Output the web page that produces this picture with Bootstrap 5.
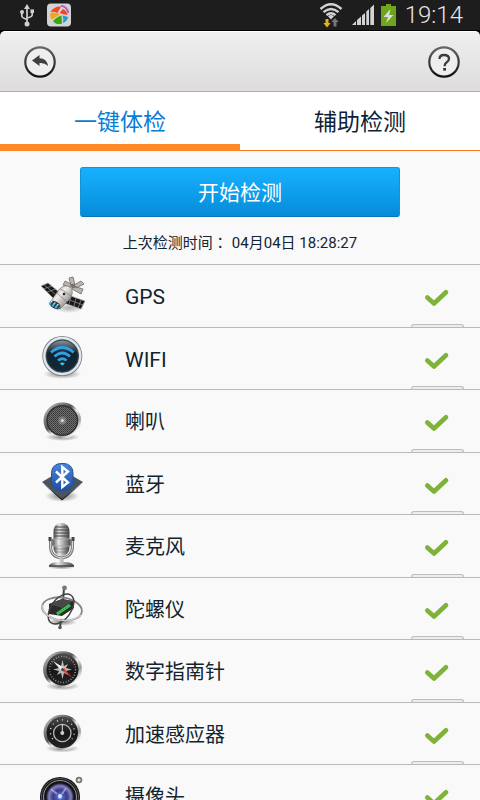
<!DOCTYPE html>
<html lang="zh-CN">
<head>
<meta charset="utf-8">
<meta name="viewport" content="width=device-width, initial-scale=1">
<title>一键体检</title>
<link rel="stylesheet" href="https://cdn.jsdelivr.net/npm/bootstrap@5.3.0/dist/css/bootstrap.min.css">
<style>
body { font-family: Roboto, "Noto Sans CJK SC", sans-serif; background: #f9f9f9; color: #12242f; }
.status { background: #1d1d1d; height: 31px; border-bottom: 1px solid #000; padding: 0 17px 0 18px; }
.app-icon { margin-left: 11px; }
.clock { font-size: 24px; line-height: 30px; color: #e6e6e6; font-weight: 300; margin-left: 6px; }
.head-wrap { background: #000; }
.head { height: 61px; padding: 0 20px 0 24px; border-radius: 5px 5px 0 0; border-top: 1px solid #fff; border-bottom: 1px solid #adadad; background: linear-gradient(#efefef, #dedcdd); }
.round-btn svg, .check, .pic, .status svg { display: block; }
.tabs { height: 59px; background: #fff; }
.tabs a { font-size: 23px; line-height: 62px; height: 59px; color: #0f1f38; border-bottom: 1px solid #f97a1b; }
.tabs a.active { color: #087dd6; border-bottom: 7px solid #ff8a25; }
.start { width: 66.6667%; height: 50px; font-size: 21px; line-height: 50px; color: #fff; border-radius: 3px; background: linear-gradient(#18b1ff, #058cd8); border: 1px solid #1293d8; border-bottom-color: #0478bd; }
.start:hover { color: #fff; background: linear-gradient(#18b1ff, #058cd8); }
.last { font-family: Roboto, "Noto Sans CJK TC", sans-serif; font-size: 15px; line-height: 24px; margin: 14px 0 9px; }
.last time { margin-left: 4px; }
.checks { border-top: 1px solid #b9b9b9; }
.checks .item { height: 62px; padding: 0 30px 0 39px; background: #f9f9f9; border: 0; border-bottom: 1px solid #b9b9b9; border-radius: 0; color: #12242f; font-size: 20px; line-height: 30px; }
.checks .item:nth-child(odd) { height: 63px; }
.checks .item::after { content: ""; position: absolute; right: 16px; bottom: 0; width: 53px; height: 3px; background: #ededed; border: 1px solid #bdbdbd; border-bottom: 0; border-radius: 3px 3px 0 0; }
.checks .name, .check { margin-top: 2px; }
.checks .latin { font-size: 21px; }
.pic { width: 48px; height: 56px; margin-right: 38px; }
</style>
<script src="https://cdn.jsdelivr.net/npm/bootstrap@5.3.0/dist/js/bootstrap.bundle.min.js"></script>
</head>
<body class="vh-100 overflow-hidden d-flex flex-column">
<svg width="0" height="0" class="position-absolute" aria-hidden="true">
  <defs>
    <linearGradient id="ring" x1="0" y1="0" x2="0" y2="1"><stop offset="0" stop-color="#666"/><stop offset="1" stop-color="#111"/></linearGradient>
    <linearGradient id="chrome" x1="0" y1="0" x2="1" y2="1"><stop offset="0" stop-color="#f4f4f4"/><stop offset=".22" stop-color="#8a8a8a"/><stop offset=".42" stop-color="#555"/><stop offset=".55" stop-color="#eee"/><stop offset=".7" stop-color="#999"/><stop offset=".85" stop-color="#fff"/><stop offset="1" stop-color="#999"/></linearGradient>
    <linearGradient id="barrel" x1="0" y1="0" x2="1" y2="0"><stop offset="0" stop-color="#4d4d4d"/><stop offset=".35" stop-color="#e8e8e8"/><stop offset=".6" stop-color="#aaa"/><stop offset="1" stop-color="#444"/></linearGradient>
    <linearGradient id="hull" x1="0" y1="0" x2="1" y2="1"><stop offset="0" stop-color="#8d8984"/><stop offset=".4" stop-color="#efeeec"/><stop offset=".7" stop-color="#a5a19c"/><stop offset="1" stop-color="#4e4a47"/></linearGradient>
    <linearGradient id="dial" x1="0" y1="0" x2="0" y2="1"><stop offset="0" stop-color="#4b4b4b"/><stop offset=".5" stop-color="#161616"/><stop offset="1" stop-color="#252525"/></linearGradient>
    <linearGradient id="navy" x1="0" y1="0" x2="0" y2="1"><stop offset="0" stop-color="#8a98a2"/><stop offset=".4" stop-color="#14222e"/><stop offset="1" stop-color="#102a38"/></linearGradient>
    <linearGradient id="blue" x1="0" y1="0" x2="0" y2="1"><stop offset="0" stop-color="#4d84d4"/><stop offset="1" stop-color="#1c50a5"/></linearGradient>
    <radialGradient id="shade"><stop offset="0" stop-color="#000" stop-opacity=".5"/><stop offset="1" stop-color="#000" stop-opacity="0"/></radialGradient>
    <radialGradient id="lens"><stop offset="0" stop-color="#d5d6ff"/><stop offset=".2" stop-color="#4a66c8"/><stop offset=".5" stop-color="#3d3a80"/><stop offset=".8" stop-color="#8583c4"/><stop offset="1" stop-color="#14142a"/></radialGradient>
    <pattern id="mesh" width="2" height="2" patternUnits="userSpaceOnUse"><rect width="2" height="2" fill="#707070"/><rect width="1" height="1" fill="#333"/><rect x="1" y="1" width="1" height="1" fill="#444"/></pattern>
    <symbol id="tick" viewBox="0 0 26 20"><path d="M3.3 10.5L10 16.5L22 5.3" fill="none" stroke="#7eb338" stroke-width="4.6" stroke-linecap="round" stroke-linejoin="round"/></symbol>
  </defs>
</svg>

<div class="status d-flex align-items-center flex-shrink-0">
  <svg width="18" height="24" viewBox="0 0 18 24" fill="none" stroke="#cfcfcf" stroke-width="1.7"><path d="M9 4V20M3.8 10V13Q4 15 9 16.5M14.2 9V12Q14 14 9 15"/><g fill="#cfcfcf" stroke="none"><path d="M9 1L12 6H6z"/><circle cx="9" cy="21" r="2.5"/><circle cx="4" cy="9" r="2"/><path d="M12.4 6.4h3.6v3.6h-3.6z"/></g></svg>
  <svg class="app-icon me-auto" width="26" height="26" viewBox="3 0 26 26"><rect x="3" y="1.500" width="24" height="23" rx="4" fill="#d2d4d3"/><path d="M6.500 10Q10 4 17 4.500L13.500 11Q10 9 6.500 10z" fill="#ef492b"/><path d="M6.300 11Q11 9.500 16 12.500L8 17.500Q5.500 15 6.300 11z" fill="#f4a51a"/><path d="M9 19Q13 14.500 17.500 13.500L18 21.500Q12 23.500 9 19z" fill="#37a80b"/><path d="M18.500 13.500Q20 17 19 21Q23.500 19 24 15z" fill="#209bd5"/><path d="M15.500 11L19 7Q23 9 23.500 13Q19 12.500 15.500 11z" fill="#ed4721"/><path d="M17 3.800Q22.500 4 24.500 11" fill="none" stroke="#bd55cd" stroke-width="1.800"/></svg>
  <svg width="24" height="26" viewBox="0 0 24 26" fill="none" stroke="#d3d3d3" stroke-width="2.400"><path d="M1.500 7Q12-2.500 22.500 7M4.500 10.200Q12 3.800 19.500 10.200M7.500 13.200Q12 9.200 16.500 13.200"/><path d="M12 17.500L9 14.200Q12 12 15 14.200z" fill="#d3d3d3" stroke="none"/><path d="M6.500 17h3v4h2.200L8 25.500L4.300 21h2.200z" fill="#e1b317" stroke="none"/><path d="M14.500 24.500h3V20h2.200L16 16l-3.700 4h2.200z" fill="#777" stroke="none"/></svg>
  <svg class="ms-2" width="24" height="24" viewBox="0 0 24 24" fill="#d3d3d3"><path d="M1 22L5 18V22zM6 17L10 13.500V22H6zM11 12.500L14 10V22H11zM15.300 8.500L18 6V22H15.300zM19.300 5L23 1.500V22H19.300z"/></svg>
  <svg class="ms-1" width="20" height="24" viewBox="0 0 20 24"><path d="M2 3H7V1H12V3H17V23H2z" fill="#6fa51d"/><path d="M11.500 6L4.500 14H9L7 20L14.500 12H10z" fill="#dedede"/></svg>
  <span class="clock">19:14</span>
</div>

<div class="head-wrap flex-shrink-0">
  <header class="head d-flex justify-content-between align-items-center">
    <button type="button" class="round-btn btn p-0 border-0" aria-label="返回"><svg width="32" height="32" viewBox="0 0 32 32"><circle cx="16" cy="16" r="14.700" fill="#eee" stroke="url(#ring)" stroke-width="2.200"/><path d="M8 14.500L15.500 9V12.200Q23 12.500 24 20Q20.500 16.500 15.500 17V20z" fill="#3f3f3f"/></svg></button>
    <button type="button" class="round-btn btn p-0 border-0" aria-label="帮助"><svg width="32" height="32" viewBox="0 0 32 32"><circle cx="16" cy="16" r="14.700" fill="#eee" stroke="url(#ring)" stroke-width="2.200"/><path d="M11.500 13Q11.500 9 16 9Q21 9 21 12.800Q21 15 18.500 16.500Q16.600 17.700 16.600 20.200" fill="none" stroke="#3c3c3c" stroke-width="2.300"/><rect x="15.200" y="22" width="2.800" height="2.600" fill="#333"/></svg></button>
  </header>
</div>

<nav class="tabs d-flex flex-shrink-0">
  <a href="#check" class="active w-50 text-center text-decoration-none" aria-current="page">一键体检</a>
  <a href="#assist" class="w-50 text-center text-decoration-none">辅助检测</a>
</nav>

<main id="check" class="flex-grow-1 overflow-hidden">
  <div class="text-center pt-3">
    <button type="button" class="start btn p-0 d-block mx-auto">开始检测</button>
    <p class="last" lang="zh-TW">上次检测时间：<time>04月04日 18:28:27</time></p>
  </div>
  <ul class="checks list-group rounded-0">
    <li class="item list-group-item d-flex align-items-center">
      <svg class="pic" viewBox="0 0 48 56"><ellipse cx="30" cy="40" rx="15" ry="5" fill="url(#shade)" opacity=".6"/><path d="M2 18L9 15L20 24L14 30zM29 27L46 33L42 41L25 35z" fill="#191919" stroke="#aaa" stroke-width=".7"/><path d="M5 16.500L17 27M4 21L13 18M8 24L17 21M28 31L44 37M32 29L30 36M37 30L35 38M42 32L39 40" stroke="#999" stroke-width=".7"/><g fill="#b9b6b0" stroke="#6c6965" stroke-width=".8"><path d="M32 18L30 10L34 9L36 17zM35 17L42 13L45 16L37 20zM34 18L44 21L42 26L33 21zM32 19L24 17L26 13L34 17z"/></g><path d="M12 33L20 21.500Q26 15 32 20Q35 25 31 31L21 41z" fill="url(#hull)" stroke="#666" stroke-width=".6"/><path d="M18 25L28 34M21 20.500L32 28" stroke="#8b8178" stroke-width=".8"/><ellipse cx="16" cy="37" rx="6" ry="3.500" transform="rotate(30 16 37)" fill="#303840"/><path d="M10.500 34.500L20 40.500" stroke="#40b8e2" stroke-width="3.500" stroke-dasharray="2 1.500"/><path d="M12 33L21 38" stroke="#e8f2f4" stroke-width="1.300" stroke-dasharray="1.500 2"/><circle cx="25" cy="26" r="1.300" fill="#222"/><circle cx="34" cy="18" r="2.200" fill="#77706b"/></svg>
      <span class="name latin">GPS</span><svg class="check ms-auto" width="26" height="20"><use href="#tick"/></svg>
    </li>
    <li class="item list-group-item d-flex align-items-center">
      <svg class="pic" viewBox="0 0 48 56"><ellipse cx="23.300" cy="43" rx="19" ry="5" fill="url(#shade)"/><circle cx="23.300" cy="25" r="20" fill="#727c87"/><circle cx="23.300" cy="25" r="18" fill="none" stroke="#e1e6ed" stroke-width="2.400"/><circle cx="23.300" cy="25" r="16" fill="url(#navy)" stroke="#333f49"/><g fill="none" stroke="#329ee3" stroke-width="2.800"><path d="M12 21.500Q23.300 11.500 34.600 21.500M15.500 25.500Q23.300 18.500 31 25.500M19 29.500Q23.300 26 27.600 29.500"/></g><path d="M23.300 34.500L20.800 32.500Q23.300 30.500 25.800 32.500z" fill="#35d2e5"/></svg>
      <span class="name latin">WIFI</span><svg class="check ms-auto" width="26" height="20"><use href="#tick"/></svg>
    </li>
    <li class="item list-group-item d-flex align-items-center">
      <svg class="pic" viewBox="0 0 48 56"><ellipse cx="23.300" cy="44" rx="17" ry="4" fill="url(#shade)"/><ellipse cx="23.300" cy="27.500" rx="18.800" ry="18" fill="url(#chrome)"/><ellipse cx="23.300" cy="27.500" rx="16" ry="15.500" fill="#303030"/><ellipse cx="23.300" cy="27.500" rx="14.500" ry="14" fill="url(#mesh)"/><circle cx="23.300" cy="27.500" r="4" fill="#999" opacity=".6"/><circle cx="23.300" cy="27.500" r="1.500" fill="#ddd"/></svg>
      <span class="name">喇叭</span><svg class="check ms-auto" width="26" height="20"><use href="#tick"/></svg>
    </li>
    <li class="item list-group-item d-flex align-items-center">
      <svg class="pic" viewBox="0 0 48 56"><ellipse cx="23" cy="40" rx="17" ry="6" fill="url(#shade)"/><path d="M3 26L23 14L44 26L23 44z" fill="#4a545e"/><path d="M4 27.500L23 43L43 27.500L23 44.500z" fill="#151b21"/><rect x="12.500" y="7.500" width="21.500" height="27" rx="9" fill="url(#blue)" stroke="#2452a0"/><path d="M17 15.500L29 26.500L23.300 31V11L29 15.500L17 26.500" fill="none" stroke="#fff" stroke-width="2.400"/></svg>
      <span class="name">蓝牙</span><svg class="check ms-auto" width="26" height="20"><use href="#tick"/></svg>
    </li>
    <li class="item list-group-item d-flex align-items-center">
      <svg class="pic" viewBox="0 0 48 56"><ellipse cx="22.500" cy="49" rx="14" ry="2.500" fill="url(#shade)"/><path d="M11.500 22V29Q12 39 22.500 40Q33 39 33.500 29V22" fill="none" stroke="#777" stroke-width="3"/><path d="M11.500 22V29Q12 39 22.500 40Q33 39 33.500 29V22" fill="none" stroke="#dedede"/><rect x="14.500" y="5" width="16" height="33" rx="8" fill="url(#barrel)"/><path d="M16 9H29M15 12H30M15 15H30M15 18H30" stroke="#3e4444" stroke-width="1.600" opacity=".65"/><path d="M15 31H30M16 34H29" stroke="#3e4444" stroke-width=".8" opacity=".5"/><rect x="13" y="21" width="19" height="7" fill="url(#barrel)" stroke="#aaa" stroke-width=".8"/><path d="M9.500 19h3v4h-3zM32.500 19h3v4h-3z" fill="#444"/><path d="M20.500 40H24.500V44Q35 44 35 48.500H10Q10 44 20.500 44z" fill="url(#barrel)"/><path d="M10 48H35" stroke="#444" stroke-width="1.500"/></svg>
      <span class="name">麦克风</span><svg class="check ms-auto" width="26" height="20"><use href="#tick"/></svg>
    </li>
    <li class="item list-group-item d-flex align-items-center">
      <svg class="pic" viewBox="0 0 48 56"><ellipse cx="23" cy="41" rx="15" ry="4" fill="url(#shade)"/><path d="M25 7L24 20M22 38L21 47" stroke="#444" stroke-width="2"/><circle cx="25.500" cy="7" r="2.400" fill="#777"/><circle cx="21" cy="46.500" r="1.800" fill="#555"/><ellipse cx="23" cy="28" rx="20" ry="11.500" transform="rotate(8 23 28)" fill="none" stroke="#858585" stroke-width="1.800"/><path d="M10 23L23 18L34 20L35 27L23 35L10 33z" fill="#2b2b2b"/><path d="M10 23L23 18L34 20L23 27z" fill="#484848"/><ellipse cx="22" cy="28" rx="10" ry="17" transform="rotate(36 22 28)" fill="none" stroke="#404040" stroke-width="1.500"/><path d="M3.500 24Q3 34 17 38.500Q33 42 42 34" fill="none" stroke="#c9c9c9" stroke-width="1.600"/><path d="M18 33L31 24" stroke="#3ec952" stroke-width="3"/><path d="M19 32L30 25" stroke="#156b2a" stroke-width=".7" stroke-dasharray="1 1"/></svg>
      <span class="name">陀螺仪</span><svg class="check ms-auto" width="26" height="20"><use href="#tick"/></svg>
    </li>
    <li class="item list-group-item d-flex align-items-center">
      <svg class="pic" viewBox="0 0 48 56"><ellipse cx="23.500" cy="43" rx="17" ry="4.500" fill="url(#shade)"/><ellipse cx="23.500" cy="26.500" rx="19.500" ry="18.300" fill="url(#chrome)"/><circle cx="23.500" cy="26.500" r="16" fill="url(#dial)"/><circle cx="23.500" cy="26.500" r="13" fill="none" stroke="#bbb" stroke-width="1.500" stroke-dasharray=".7 2"/><path d="M23.500 17L25 23L29 21L27 25L33 26.500L27 28L29 32L25 30L23.500 36L22 30L18 32L20 28L14 26.500L20 25L18 21L22 23z" fill="#b9b9b9"/><path d="M14 18L25 25L22.500 28z" fill="#f0f0f0"/><path d="M25 25L33 34.500L23.500 28z" fill="#e33a36"/><circle cx="23.500" cy="26.500" r="1.500" fill="#444"/></svg>
      <span class="name">数字指南针</span><svg class="check ms-auto" width="26" height="20"><use href="#tick"/></svg>
    </li>
    <li class="item list-group-item d-flex align-items-center">
      <svg class="pic" viewBox="0 0 48 56"><ellipse cx="23.300" cy="42.500" rx="17" ry="4" fill="url(#shade)"/><ellipse cx="23.300" cy="26.500" rx="18.800" ry="17.800" fill="url(#chrome)"/><circle cx="23.300" cy="26.500" r="15.700" fill="url(#dial)"/><path d="M13.700 33A12 12 0 1 1 33 33" fill="none" stroke="#ddd" stroke-width="1.400" stroke-dasharray="1 4.200"/><circle cx="23.300" cy="27" r="8.700" fill="none" stroke="#b8b8b8" stroke-width="1.300"/><path d="M23.300 18V27" stroke="#ddd"/><circle cx="23.300" cy="27" r="2" fill="#ccc"/></svg>
      <span class="name">加速感应器</span><svg class="check ms-auto" width="26" height="20"><use href="#tick"/></svg>
    </li>
    <li class="item list-group-item d-flex align-items-center">
      <svg class="pic" viewBox="0 0 48 56"><circle cx="21" cy="29" r="20" fill="#151515"/><circle cx="21" cy="29" r="18.500" fill="none" stroke="#555"/><circle cx="21" cy="29" r="16.500" fill="none" stroke="#999"/><circle cx="21" cy="29" r="14" fill="url(#lens)"/><path d="M12 21L18 26M27 20L23 26" stroke="#a5b8ef" stroke-width="2" opacity=".7"/><circle cx="21" cy="28" r="2" fill="#dfe5ff"/><circle cx="40" cy="12" r="3.300" fill="#777"/><circle cx="40" cy="12" r="1.500" fill="#f0e9b5"/></svg>
      <span class="name">摄像头</span><svg class="check ms-auto" width="26" height="20"><use href="#tick"/></svg>
    </li>
  </ul>
</main>
</body>
</html>
